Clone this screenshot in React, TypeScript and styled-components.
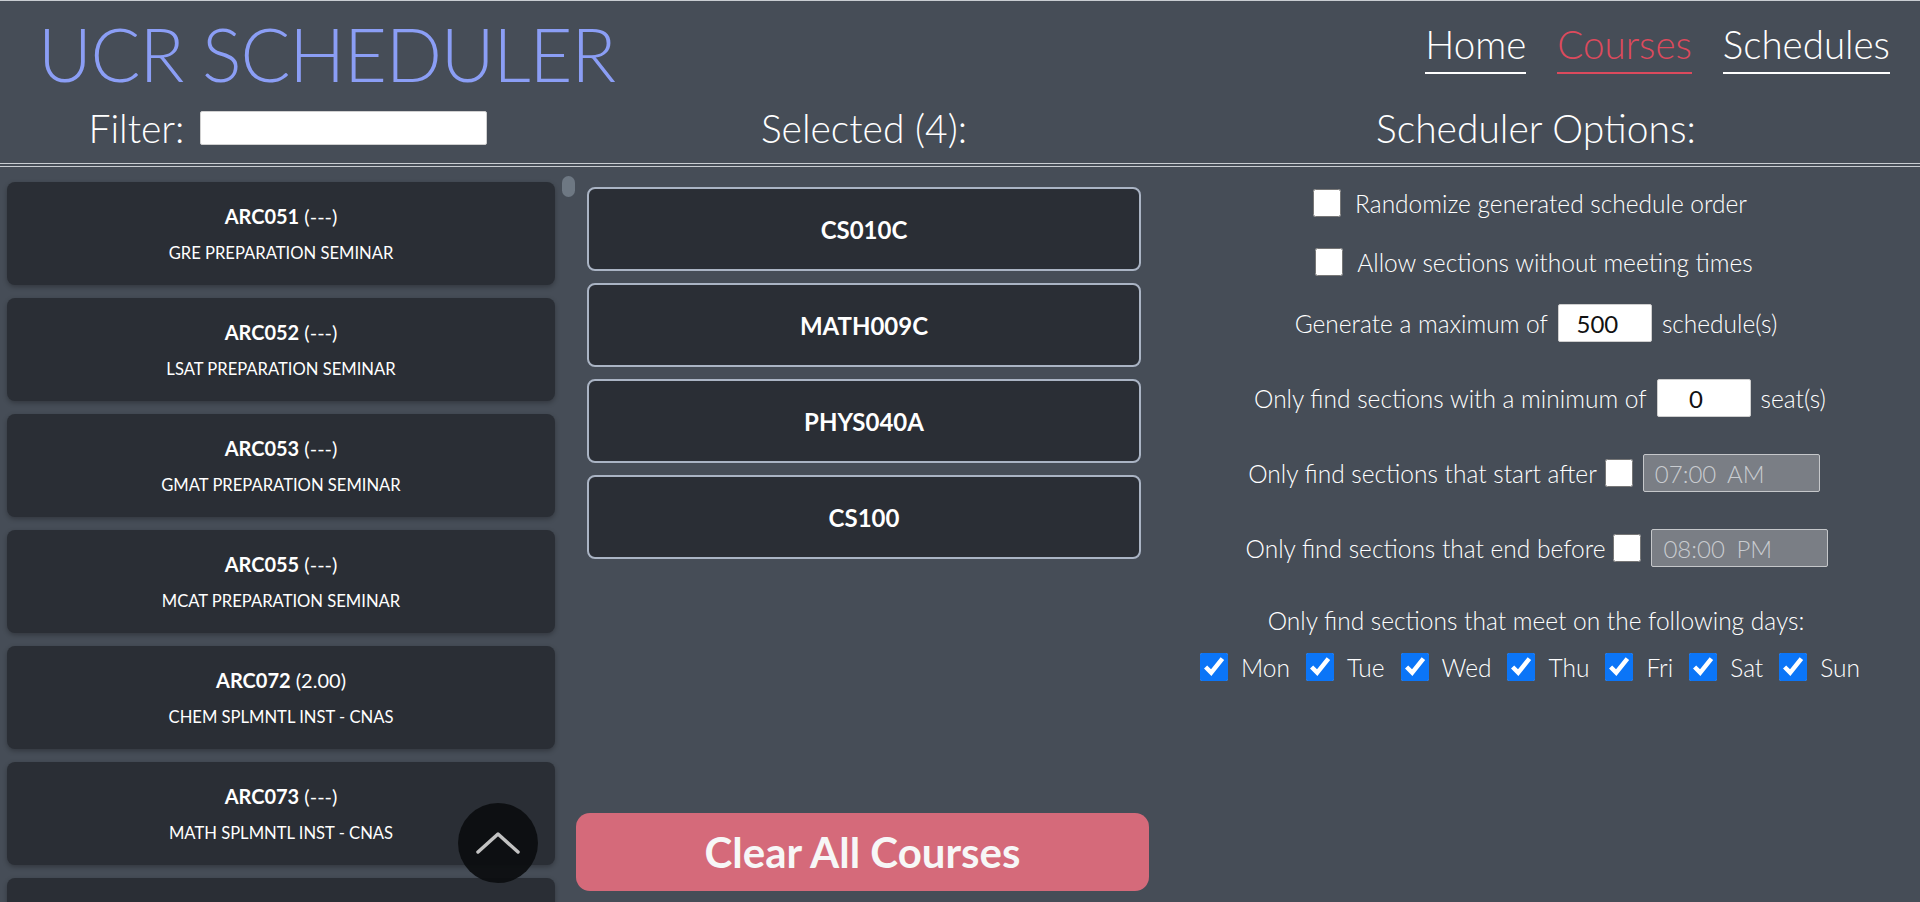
import React from "react";
import styled, { createGlobalStyle } from "styled-components";

const GlobalStyle = createGlobalStyle`
  * { box-sizing: border-box; }
  html, body { margin: 0; padding: 0; height: 100%; overflow: hidden; background: #464d57; }
  body { font-family: Lato, "Open Sans", sans-serif; font-weight: 300; color: #ffffff; }
  #root { height: 100%; }
`;

const Page = styled.div`
  height: 100vh;
  display: flex;
  flex-direction: column;
  background: #464d57;
`;

const Header = styled.header`
  flex: none;
  border-top: 1px solid #c9cdd2;
  border-bottom: 4px double #c9cdd2;
  height: 167px;
  display: flex;
  flex-direction: column;
`;

const TopRow = styled.div`
  display: flex;
  justify-content: space-between;
  align-items: flex-start;
  padding: 0 30px 0 38px;
  height: 95px;
`;

const Title = styled.h1`
  margin: 16px 0 0;
  font-size: 74px;
  line-height: 1;
  font-weight: 300;
  color: #8b9ef5;
  letter-spacing: -1.2px;
  white-space: nowrap;
`;

const Nav = styled.nav`
  display: flex;
  gap: 31px;
  margin-top: 20px;
`;

const NavLink = styled.a<{ $active?: boolean }>`
  font-size: 38.5px;
  line-height: 46px;
  font-weight: 300;
  color: ${(p) => (p.$active ? "#dc4a5d" : "#ffffff")};
  text-decoration: none;
  padding-bottom: 5px;
  border-bottom: 2px solid ${(p) => (p.$active ? "#dc4a5d" : "#ffffff")};
`;

const SubRow = styled.div`
  display: grid;
  grid-template-columns: 30% 30% 40%;
  align-items: center;
  flex: 1;
  padding-bottom: 3px;
`;

const SubHeading = styled.div`
  display: flex;
  justify-content: center;
  align-items: center;
  gap: 16px;
  font-size: 39px;
  line-height: 48px;
  font-weight: 300;
`;

const FilterInput = styled.input`
  width: 287px;
  height: 34px;
  border: 1px solid #d0d0d0;
  border-radius: 2px;
  background: #ffffff;
  font-family: inherit;
  font-size: 20px;
  padding: 0 6px;
  outline: none;
`;

const Main = styled.main`
  flex: 1;
  min-height: 0;
  display: grid;
  grid-template-columns: 30% 30% 40%;
`;

const ListWrap = styled.div`
  position: relative;
  min-height: 0;
`;

const CourseList = styled.div`
  height: 100%;
  overflow-y: auto;
  padding: 15px 21px 0 7px;
  scrollbar-width: none;
  &::-webkit-scrollbar { display: none; }
`;

const ScrollThumb = styled.div`
  position: absolute;
  top: 9px;
  right: 1px;
  width: 13px;
  height: 21px;
  border-radius: 7px;
  background: #6e7883;
`;

const CourseCard = styled.div`
  height: 103px;
  margin-bottom: 13px;
  background: #2a2e35;
  border-radius: 8px;
  box-shadow: 0 2px 5px rgba(0, 0, 0, 0.28);
  display: flex;
  flex-direction: column;
  align-items: center;
  justify-content: center;
  gap: 15px;
`;

const CourseCode = styled.div`
  font-size: 20px;
  line-height: 24px;
  font-weight: 400;
  b { font-weight: 700; }
`;

const CourseName = styled.div`
  font-size: 16.6px;
  line-height: 20px;
  font-weight: 400;
`;

const ScrollTop = styled.button`
  position: absolute;
  left: 458px;
  bottom: 19px;
  width: 80px;
  height: 80px;
  border-radius: 50%;
  border: none;
  background: rgba(12, 14, 16, 0.94);
  display: flex;
  align-items: center;
  justify-content: center;
  padding: 0;
  cursor: pointer;
`;

const SelectedCol = styled.div`
  display: flex;
  flex-direction: column;
  padding: 20px 3px 11px 0;
  min-height: 0;
`;

const SelectedBox = styled.div`
  height: 84px;
  margin: 0 8px 12px 11px;
  border: 2px solid #aab4c4;
  border-radius: 8px;
  background: #2a2e35;
  display: flex;
  align-items: center;
  justify-content: center;
  font-size: 24px;
  font-weight: 700;
`;

const ClearButton = styled.button`
  margin-top: auto;
  height: 78px;
  border: none;
  border-radius: 14px;
  background: #d56a7a;
  color: #f7f7f7;
  font-family: inherit;
  font-size: 42px;
  font-weight: 700;
  cursor: pointer;
`;

const OptionsCol = styled.div`
  display: flex;
  flex-direction: column;
  align-items: center;
  font-size: 24.5px;
  font-weight: 300;
`;

const OptionRow = styled.div<{ $mt: number; $shift?: number }>`
  margin-top: ${(p) => p.$mt}px;
  height: 40px;
  display: flex;
  align-items: center;
  justify-content: center;
  gap: 8px;
  transform: translateX(${(p) => p.$shift ?? 0}px);
  white-space: nowrap;
`;

const Check = styled.input`
  width: 28px;
  height: 28px;
  margin: 0;
  accent-color: #0b75f7;
  flex: none;
`;

const CheckLabel = styled.label<{ $gap?: number }>`
  display: flex;
  align-items: center;
  gap: ${(p) => p.$gap ?? 14}px;
`;

const NumberInput = styled.input`
  width: 94px;
  height: 38px;
  border: 1px solid #cfcfcf;
  border-radius: 2px;
  background: #ffffff;
  color: #111;
  font-family: inherit;
  font-size: 24px;
  font-weight: 400;
  text-align: center;
  padding: 0 4px;
  margin: 0 2px;
`;

const TimeInput = styled.input`
  width: 177px;
  height: 38px;
  border: 1px solid #c5c7ca;
  border-radius: 2px;
  background: #7a7e85;
  color: #c9ccd0;
  font-family: inherit;
  font-size: 24px;
  font-weight: 300;
  word-spacing: 5px;
  padding: 0 11px;
  margin-left: 2px;
`;

const Days = styled.div`
  margin-top: 7px;
  height: 40px;
  display: flex;
  align-items: center;
  gap: 16px;
  transform: translateX(-6px);
`;

const courses = [
  ["ARC051", "---", "GRE PREPARATION SEMINAR"],
  ["ARC052", "---", "LSAT PREPARATION SEMINAR"],
  ["ARC053", "---", "GMAT PREPARATION SEMINAR"],
  ["ARC055", "---", "MCAT PREPARATION SEMINAR"],
  ["ARC072", "2.00", "CHEM SPLMNTL INST - CNAS"],
  ["ARC073", "---", "MATH SPLMNTL INST - CNAS"],
  ["ARC074", "---", "PHYS SPLMNTL INST - CNAS"],
  ["ARC075", "---", "BIOL SPLMNTL INST - CNAS"],
];

const selected = ["CS010C", "MATH009C", "PHYS040A", "CS100"];
const days = ["Mon", "Tue", "Wed", "Thu", "Fri", "Sat", "Sun"];

export default function App() {
  return (
    <Page>
      <GlobalStyle />
      <Header>
        <TopRow>
          <Title>UCR SCHEDULER</Title>
          <Nav>
            <NavLink href="#">Home</NavLink>
            <NavLink href="#" $active>Courses</NavLink>
            <NavLink href="#">Schedules</NavLink>
          </Nav>
        </TopRow>
        <SubRow>
          <SubHeading>
            <span>Filter:</span>
            <FilterInput type="text" />
          </SubHeading>
          <SubHeading>Selected (4):</SubHeading>
          <SubHeading>Scheduler Options:</SubHeading>
        </SubRow>
      </Header>
      <Main>
        <ListWrap>
          <CourseList>
            {courses.map(([code, units, name]) => (
              <CourseCard key={code}>
                <CourseCode>
                  <b>{code}</b> ({units})
                </CourseCode>
                <CourseName>{name}</CourseName>
              </CourseCard>
            ))}
          </CourseList>
          <ScrollThumb />
          <ScrollTop aria-label="Scroll to top">
            <svg width="44" height="24" viewBox="0 0 44 24" fill="none">
              <path d="M2 21 L22 3 L42 21" stroke="#c2c2c2" strokeWidth="3.5" strokeLinecap="round" strokeLinejoin="round" />
            </svg>
          </ScrollTop>
        </ListWrap>
        <SelectedCol>
          {selected.map((s) => (
            <SelectedBox key={s}>{s}</SelectedBox>
          ))}
          <ClearButton>Clear All Courses</ClearButton>
        </SelectedCol>
        <OptionsCol>
          <OptionRow $mt={16} $shift={-6}>
            <CheckLabel>
              <Check type="checkbox" />
              Randomize generated schedule order
            </CheckLabel>
          </OptionRow>
          <OptionRow $mt={19} $shift={-2}>
            <CheckLabel>
              <Check type="checkbox" />
              Allow sections without meeting times
            </CheckLabel>
          </OptionRow>
          <OptionRow $mt={21}>
            Generate a maximum of <NumberInput type="number" defaultValue={500} /> schedule(s)
          </OptionRow>
          <OptionRow $mt={35} $shift={4}>
            Only find sections with a minimum of <NumberInput type="number" defaultValue={0} /> seat(s)
          </OptionRow>
          <OptionRow $mt={35} $shift={-2}>
            Only find sections that start after <Check type="checkbox" /> <TimeInput type="text" disabled defaultValue="07:00 AM" />
          </OptionRow>
          <OptionRow $mt={35} $shift={1}>
            Only find sections that end before <Check type="checkbox" /> <TimeInput type="text" disabled defaultValue="08:00 PM" />
          </OptionRow>
          <OptionRow $mt={32}>Only find sections that meet on the following days:</OptionRow>
          <Days>
            {days.map((d) => (
              <CheckLabel key={d} $gap={13}>
                <Check type="checkbox" defaultChecked />
                {d}
              </CheckLabel>
            ))}
          </Days>
        </OptionsCol>
      </Main>
    </Page>
  );
}
